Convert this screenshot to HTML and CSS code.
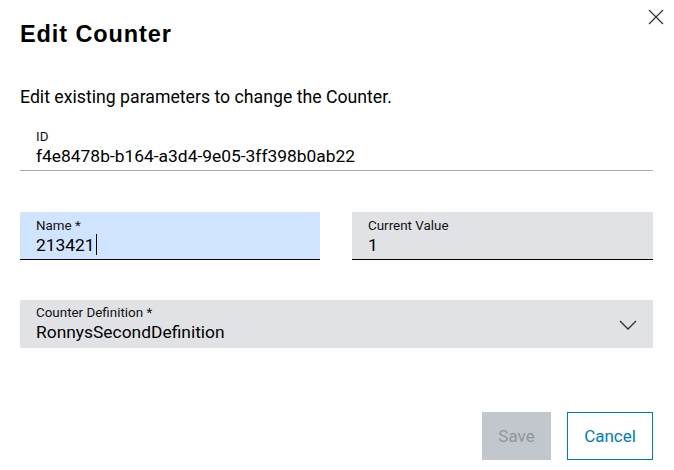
FILE: index.html
```html
<!DOCTYPE html>
<html>
<head>
<meta charset="utf-8">
<link rel="stylesheet" href="styles.css">
</head>
<body>
<div class="dialog">
  <button class="close" aria-label="Close">
    <svg width="16" height="16" viewBox="0 0 16 16"><path d="M1 1L15 15M15 1L1 15" stroke="#2e3033" stroke-width="1.2" fill="none"/></svg>
  </button>
  <h1 class="title">Edit Counter</h1>
  <p class="desc">Edit existing parameters to change the Counter.</p>
  <div class="readonly">
    <div class="label">ID</div>
    <div class="value">f4e8478b-b164-a3d4-9e05-3ff398b0ab22</div>
  </div>
  <div class="row">
    <div class="field focused">
      <div class="label">Name *</div>
      <div class="value">213421<span class="caret"></span></div>
    </div>
    <div class="field">
      <div class="label">Current Value</div>
      <div class="value">1</div>
    </div>
  </div>
  <div class="field select">
    <div class="select-text">
      <div class="label">Counter Definition *</div>
      <div class="value">RonnysSecondDefinition</div>
    </div>
    <svg class="chev" width="18" height="10" viewBox="0 0 18 10"><path d="M1 1L9 9L17 1" stroke="#2e3033" stroke-width="1.3" fill="none"/></svg>
  </div>
  <div class="actions">
    <button class="btn save" disabled>Save</button>
    <button class="btn cancel">Cancel</button>
  </div>
</div>
</body>
</html>
```
FILE: styles.css
```css
html, body {
  margin: 0;
  padding: 0;
  background: #fff;
}
body {
  font-family: Roboto, "Liberation Sans", sans-serif;
  color: #000;
}
.dialog {
  position: relative;
  width: 674px;
  height: 470px;
  box-sizing: border-box;
  padding: 0 21px 0 20px;
}
.close {
  position: absolute;
  top: 8px;
  right: 9px;
  width: 18px;
  height: 18px;
  padding: 1px;
  border: 0;
  background: none;
}
.title {
  margin: 0;
  padding-top: 19px;
  height: 30px;
  line-height: 30px;
  font-family: "Liberation Sans", Arial, sans-serif;
  font-size: 23.5px;
  font-weight: 700;
  letter-spacing: 0.9px;
}
.desc {
  margin: 37px 0 0;
  font-size: 17.7px;
  line-height: 22px;
}
.readonly {
  margin-top: 21px;
  padding: 0 16px 3px;
  border-bottom: 1px solid #a4abb3;
}
.label {
  font-size: 13.4px;
  line-height: 16px;
  color: #111;
}
.value {
  font-size: 17.4px;
  line-height: 22px;
}
.row {
  display: grid;
  grid-template-columns: 300px 301px;
  gap: 32px;
  margin-top: 41px;
}
.field {
  background: #e0e2e5;
  height: 48px;
  box-sizing: border-box;
  padding: 6px 16px 0;
  border-bottom: 1px solid #000;
}
.field.focused {
  background: #d1e4ff;
}
.caret {
  display: inline-block;
  width: 1px;
  height: 21px;
  background: #000;
  vertical-align: -4px;
  margin-left: 1px;
}
.select {
  margin-top: 40px;
  border-bottom: 0;
  display: flex;
  align-items: flex-start;
  justify-content: space-between;
  padding-top: 5px;
  padding-right: 16px;
}
.chev {
  margin-top: 15px;
}
.actions {
  display: flex;
  justify-content: flex-end;
  gap: 16px;
  margin-top: 64px;
}
.btn {
  height: 48px;
  box-sizing: border-box;
  font-family: Roboto, "Liberation Sans", sans-serif;
  font-size: 17px;
  padding: 0;
}
.save {
  width: 69px;
  background: #c1c7cc;
  color: #8f969c;
  border: 0;
}
.cancel {
  width: 86px;
  background: #fff;
  color: #007bc0;
  border: 1px solid #007bc0;
}
```
